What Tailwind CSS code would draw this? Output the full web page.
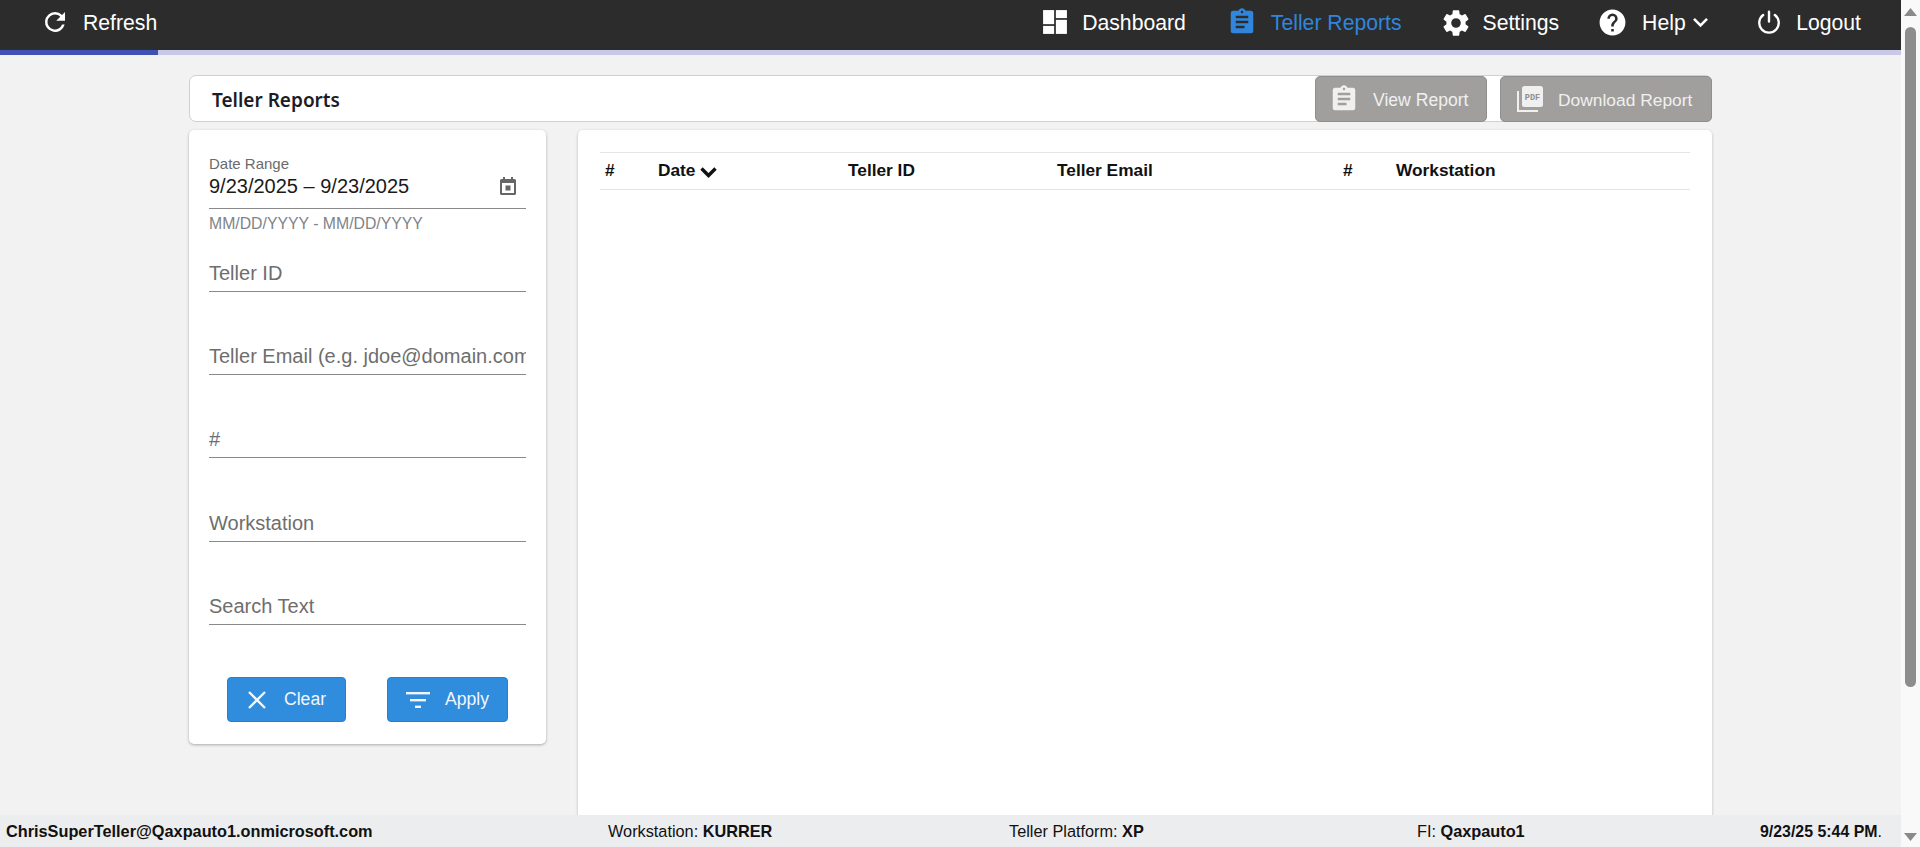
<!DOCTYPE html>
<html><head><meta charset="utf-8">
<script src="https://cdn.jsdelivr.net/npm/@tailwindcss/browser@4"></script>
</head>
<body class="overflow-hidden">
<div class="flex h-[847px] w-[1920px] font-['Liberation_Sans',Arial,sans-serif] bg-[#f2f2f2]">
  <div class="flex flex-col w-[1901px] h-full overflow-hidden">
    <!-- Nav -->
    <header class="h-[50px] shrink-0 bg-[#2c2c2c] text-white text-[21.2px] flex items-center pl-[40px] pb-[5px]">
      <div class="flex items-center gap-[13px]">
        <svg class="w-[30px] h-[30px]" viewBox="0 0 24 24" fill="#fff"><path d="M17.65 6.35A7.95 7.95 0 0 0 12 4a8 8 0 1 0 7.73 10h-2.08A6 6 0 1 1 12 6c1.66 0 3.14.69 4.22 1.78L13 11h7V4l-2.35 2.35z"/></svg>
        <span>Refresh</span>
      </div>
      <nav class="ml-auto flex items-center h-full">
        <div class="flex items-center gap-[14px] mr-[41px]">
          <svg class="w-[26px] h-[26px]" viewBox="0 0 24 24" fill="#fff"><rect x="1" y="1" width="10.2" height="13"/><rect x="1" y="15.6" width="10.2" height="7.4"/><rect x="12.8" y="1" width="10.2" height="7.4"/><rect x="12.8" y="10" width="10.2" height="13"/></svg>
          <span>Dashboard</span>
        </div>
        <div class="flex items-center gap-[14px] text-[#2f86dc] mr-[38px]">
          <svg class="w-[30px] h-[30px]" viewBox="0 0 24 24" fill="#2f86dc"><path d="M19 3h-4.18C14.4 1.84 13.3 1 12 1s-2.4.84-2.82 2H5a2 2 0 0 0-2 2v14a2 2 0 0 0 2 2h14a2 2 0 0 0 2-2V5a2 2 0 0 0-2-2zm-7 0a1 1 0 1 1 0 2 1 1 0 0 1 0-2zm2 14H7v-2h7v2zm3-4H7v-2h10v2zm0-4H7V7h10v2z"/></svg>
          <span>Teller Reports</span>
        </div>
        <div class="flex items-center gap-[11px] mr-[38px]">
          <svg class="w-[32px] h-[32px]" viewBox="0 0 24 24" fill="#fff"><path d="M19.14 12.94a7.1 7.1 0 0 0 .05-.94c0-.32-.02-.64-.06-.94l2.03-1.58a.49.49 0 0 0 .12-.61l-1.92-3.32a.49.49 0 0 0-.59-.22l-2.39.96a7 7 0 0 0-1.62-.94l-.36-2.54a.48.48 0 0 0-.48-.41h-3.84a.48.48 0 0 0-.47.41l-.36 2.54c-.59.24-1.13.57-1.62.94l-2.39-.96a.48.48 0 0 0-.59.22L2.74 8.87a.47.47 0 0 0 .12.61l2.03 1.58c-.05.3-.09.63-.09.94s.02.64.06.94l-2.03 1.58a.49.49 0 0 0-.12.61l1.92 3.32c.12.22.37.29.59.22l2.39-.96c.5.38 1.03.7 1.62.94l.36 2.54c.05.24.24.41.48.41h3.84c.24 0 .44-.17.47-.41l.36-2.54c.59-.24 1.13-.56 1.62-.94l2.39.96c.22.08.47 0 .59-.22l1.92-3.32a.47.47 0 0 0-.12-.61l-2.01-1.58zM12 15.6a3.6 3.6 0 1 1 0-7.2 3.6 3.6 0 0 1 0 7.2z"/></svg>
          <span>Settings</span>
        </div>
        <div class="flex items-center mr-[46.5px]">
          <svg class="w-[31px] h-[31px] mr-[14px]" viewBox="0 0 24 24" fill="#fff"><path d="M12 2a10 10 0 1 0 0 20 10 10 0 0 0 0-20zm1 17h-2v-2h2v2zm2.07-7.75-.9.92C13.45 12.9 13 13.5 13 15h-2v-.5c0-1.1.45-2.1 1.17-2.83l1.24-1.26c.37-.36.59-.86.59-1.41a2 2 0 0 0-4 0H8a4 4 0 0 1 8 0c0 .88-.36 1.68-.93 2.25z"/></svg>
          <span>Help</span>
          <svg class="w-[19px] h-[19px] ml-[5px]" viewBox="0 0 16 16" fill="none" stroke="#fff" stroke-width="2.2"><path d="M2.5 5 L8 10.5 L13.5 5"/></svg>
        </div>
        <div class="flex items-center gap-[14px] mr-[40px]">
          <svg class="w-[26px] h-[26px]" viewBox="0 0 24 24" fill="none" stroke="#fff" stroke-width="2.2" stroke-linecap="round"><path d="M12 2.5v9"/><path d="M6.6 5.6a9 9 0 1 0 10.8 0"/></svg>
          <span>Logout</span>
        </div>
      </nav>
    </header>
    <!-- Progress -->
    <div class="h-[5px] shrink-0 bg-[#c8c9e6]"><div class="h-full w-[158px] bg-[#3f51b5]"></div></div>

    <!-- Main -->
    <main class="flex-1 min-h-0 overflow-hidden pt-[20px] pl-[189px] pr-[189px]">
      <div class="h-[47px] bg-white border border-[#d0d0d0] rounded-[7px] flex items-center justify-between">
        <h1 class="pl-[22px] pt-[3px] text-[19px] font-semibold text-[#1c1c28] font-['Noto_Sans','Open_Sans',sans-serif]">Teller Reports</h1>
        <div class="flex gap-[13px] h-[46px] -mr-px -mb-px">
          <div class="w-[172px] bg-[#a09f9d] border border-[#8f8f8f] rounded-[5px] flex items-center pl-[13px] pt-[2px] text-[#f0f0f0] text-[17.6px]">
            <svg class="w-[30px] h-[30px] shrink-0 -mt-[2px]" viewBox="0 0 24 24" fill="#f0f0f0"><path d="M19 3h-4.18C14.4 1.84 13.3 1 12 1s-2.4.84-2.82 2H5a2 2 0 0 0-2 2v14a2 2 0 0 0 2 2h14a2 2 0 0 0 2-2V5a2 2 0 0 0-2-2zm-7 0a1 1 0 1 1 0 2 1 1 0 0 1 0-2zm2 14H7v-2h7v2zm3-4H7v-2h10v2zm0-4H7V7h10v2z"/></svg>
            <span class="ml-[14px]">View Report</span>
          </div>
          <div class="w-[212px] bg-[#a09f9d] border border-[#8f8f8f] rounded-[5px] flex items-center pl-[15px] pt-[2px] text-[#f0f0f0] text-[17.4px]">
            <svg class="w-[28px] h-[28px] shrink-0 -mt-[2px]" viewBox="0 0 28 28"><path d="M2 6v20h20" fill="none" stroke="#f0f0f0" stroke-width="2"/><rect x="6" y="1" width="21" height="21" rx="2.5" fill="#f0f0f0"/><text x="16.5" y="14.5" font-size="8.5" font-weight="700" text-anchor="middle" fill="#8f8f8f" font-family="Liberation Mono, monospace">PDF</text></svg>
            <span class="ml-[14px]">Download Report</span>
          </div>
        </div>
      </div>

      <div class="flex items-start gap-[32px] mt-[8px]">
        <!-- Filters -->
        <aside class="w-[357px] h-[614px] shrink-0 bg-white rounded-[5px] shadow-[0_1px_3px_rgba(0,0,0,0.3)] px-[20px] pt-[26px]">
          <div class="h-[53px] border-b border-[#8a8a8a] w-[317px] relative">
            <div class="text-[15px] leading-[16px] text-[#6b6b6b]">Date Range</div>
            <div class="text-[20px] leading-[24px] mt-[2px] text-[#1a1a1a]">9/23/2025 – 9/23/2025</div>
            <svg class="absolute right-[8px] top-[20px] w-[20px] h-[20px]" viewBox="0 0 20 20" fill="#666"><path d="M5 1h2v2h6V1h2v2h1.5A1.5 1.5 0 0 1 18 4.5v13a1.5 1.5 0 0 1-1.5 1.5h-13A1.5 1.5 0 0 1 2 17.5v-13A1.5 1.5 0 0 1 3.5 3H5V1zM4 7v10h12V7H4zm3.5 2.5h5v5h-5v-5z" fill-rule="evenodd"/></svg>
          </div>
          <div class="text-[15.8px] leading-[16px] mt-[7px] text-[#7f8489]">MM/DD/YYYY - MM/DD/YYYY</div>
          <div class="mt-[23px] h-[37px] w-[317px] border-b border-[#8a8a8a] text-[20px] leading-[36px] text-[#6e6e6e] overflow-hidden whitespace-nowrap">Teller ID</div>
          <div class="mt-[46px] h-[37px] w-[317px] border-b border-[#8a8a8a] text-[20px] leading-[36px] text-[#6e6e6e] overflow-hidden whitespace-nowrap">Teller Email (e.g. jdoe@domain.com)</div>
          <div class="mt-[46px] h-[37px] w-[317px] border-b border-[#8a8a8a] text-[20px] leading-[36px] text-[#6e6e6e] overflow-hidden whitespace-nowrap">#</div>
          <div class="mt-[47px] h-[37px] w-[317px] border-b border-[#8a8a8a] text-[20px] leading-[36px] text-[#6e6e6e] overflow-hidden whitespace-nowrap">Workstation</div>
          <div class="mt-[46px] h-[37px] w-[317px] border-b border-[#8a8a8a] text-[20px] leading-[36px] text-[#6e6e6e] overflow-hidden whitespace-nowrap">Search Text</div>
          <div class="flex mt-[52px] ml-[18px] gap-[41px]">
            <div class="w-[119px] h-[45px] bg-[#308cdc] border border-[#2a7fca] rounded-[4px] flex items-center pl-[19px] text-[#f2f6fb] text-[17.6px]">
              <svg class="w-[20px] h-[20px]" viewBox="0 0 20 20" fill="none" stroke="#f2f6fb" stroke-width="2.4"><path d="M2 2 L18 18 M18 2 L2 18"/></svg>
              <span class="ml-[17px]">Clear</span>
            </div>
            <div class="w-[121px] h-[45px] bg-[#308cdc] border border-[#2a7fca] rounded-[4px] flex items-center pl-[18px] text-[#f2f6fb] text-[17.6px]">
              <svg class="w-[24px] h-[18px]" viewBox="0 0 24 18" fill="#f2f6fb"><rect x="0" y="1" width="24" height="2.4"/><rect x="4" y="8" width="16" height="2.4"/><rect x="9" y="14.6" width="6" height="2.4"/></svg>
              <span class="ml-[15px]">Apply</span>
            </div>
          </div>
        </aside>
        <!-- Table -->
        <section class="flex-1 h-[800px] bg-white rounded-[5px] shadow-[0_1px_3px_rgba(0,0,0,0.25)] px-[22px] pt-[22px]">
          <div class="h-[38px] border-y border-[#e2e4e8] flex items-center text-[17.3px] font-bold text-[#111]">
            <div class="w-[58px] pl-[5px]">#</div>
            <div class="w-[190px] flex items-center">Date<svg class="w-[17px] h-[14px] ml-[5px] mt-[1px]" viewBox="0 0 17 14" fill="none" stroke="#111" stroke-width="3.4"><path d="M1.5 3.5 L8.5 10.5 L15.5 3.5"/></svg></div>
            <div class="w-[209px]">Teller ID</div>
            <div class="w-[286px]">Teller Email</div>
            <div class="w-[53px]">#</div>
            <div>Workstation</div>
          </div>
        </section>
      </div>
    </main>

    <!-- Footer -->
    <footer class="h-[32px] shrink-0 bg-[#ecedef] relative flex items-center text-[16.3px] text-[#111] pl-[6px] pt-px">
      <b class="w-[602px]">ChrisSuperTeller@Qaxpauto1.onmicrosoft.com</b>
      <span class="w-[401px]">Workstation: <b>KURRER</b></span>
      <span class="w-[408px]">Teller Platform: <b>XP</b></span>
      <span class="w-[343px]">FI: <b>Qaxpauto1</b></span>
      <span class="text-[15.9px]"><b>9/23/25 5:44 PM</b>.</span>
    </footer>
  </div>
  <!-- Scrollbar -->
  <div class="w-[19px] h-full bg-[#f9f9f9] flex flex-col items-center">
    <svg class="w-[13px] h-[8px] mt-[8px] shrink-0" viewBox="0 0 13 8" fill="#8a8a8a"><path d="M6.5 0 L13 8 H0 Z"/></svg>
    <div class="w-[11px] h-[660px] mt-[11px] rounded-full bg-[#8d8d8d]"></div>
    <svg class="w-[13px] h-[8px] mt-auto mb-[6px] shrink-0" viewBox="0 0 13 8" fill="#8a8a8a"><path d="M6.5 8 L13 0 H0 Z"/></svg>
  </div>
</div>
</body></html>
